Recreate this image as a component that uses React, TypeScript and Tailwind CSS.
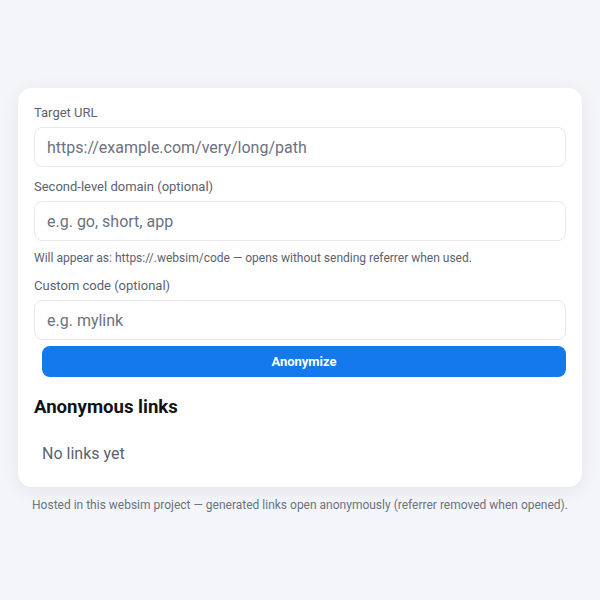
import React, { useState } from "react";

const font = { fontFamily: "Roboto, 'Noto Sans', sans-serif" };

const Field = ({ label, placeholder }: { label: string; placeholder: string }) => (
  <div className="flex flex-col">
    <label className="text-[13px] leading-[17px] text-[#5b6270] mb-[6px]">{label}</label>
    <input
      placeholder={placeholder}
      className="h-10 w-full rounded-lg border border-[#e6e8ec] bg-white px-3 text-[16px] text-[#374151] placeholder:text-[#6b7280] outline-none"
    />
  </div>
);

export default function App() {
  const [links] = useState<string[]>([]);

  return (
    <div className="min-h-[600px] w-full bg-[#f3f5f9] px-[18px] pt-[88px]" style={font}>
      <div className="rounded-[14px] bg-white px-4 pt-4 pb-[23px] shadow-[0_4px_18px_rgba(20,30,60,0.07)]">
        <Field label="Target URL" placeholder="https://example.com/very/long/path" />
        <div className="mt-[11px]">
          <Field label="Second-level domain (optional)" placeholder="e.g. go, short, app" />
        </div>
        <p className="mt-[10px] text-[12px] leading-[15px] text-[#5b6270]">
          Will appear as: https://.websim/code — opens without sending referrer when used.
        </p>
        <div className="mt-[11px]">
          <Field label="Custom code (optional)" placeholder="e.g. mylink" />
        </div>
        <button className="mt-[6px] ml-2 h-[31px] w-[calc(100%-8px)] rounded-lg bg-[#1479ec] text-[13px] font-bold text-white">
          Anonymize
        </button>
        <h2 className="mt-[18px] text-[18.6px] leading-6 font-bold text-[#111318]">Anonymous links</h2>
        <div className="mt-[25px] pl-2 text-[16px] leading-5 text-[#5b6270]">
          {links.length === 0 ? "No links yet" : null}
        </div>
      </div>
      <p className="mt-[11px] text-center text-[12px] leading-[15px] text-[#6b7280]">
        Hosted in this websim project — generated links open anonymously (referrer removed when opened).
      </p>
    </div>
  );
}
